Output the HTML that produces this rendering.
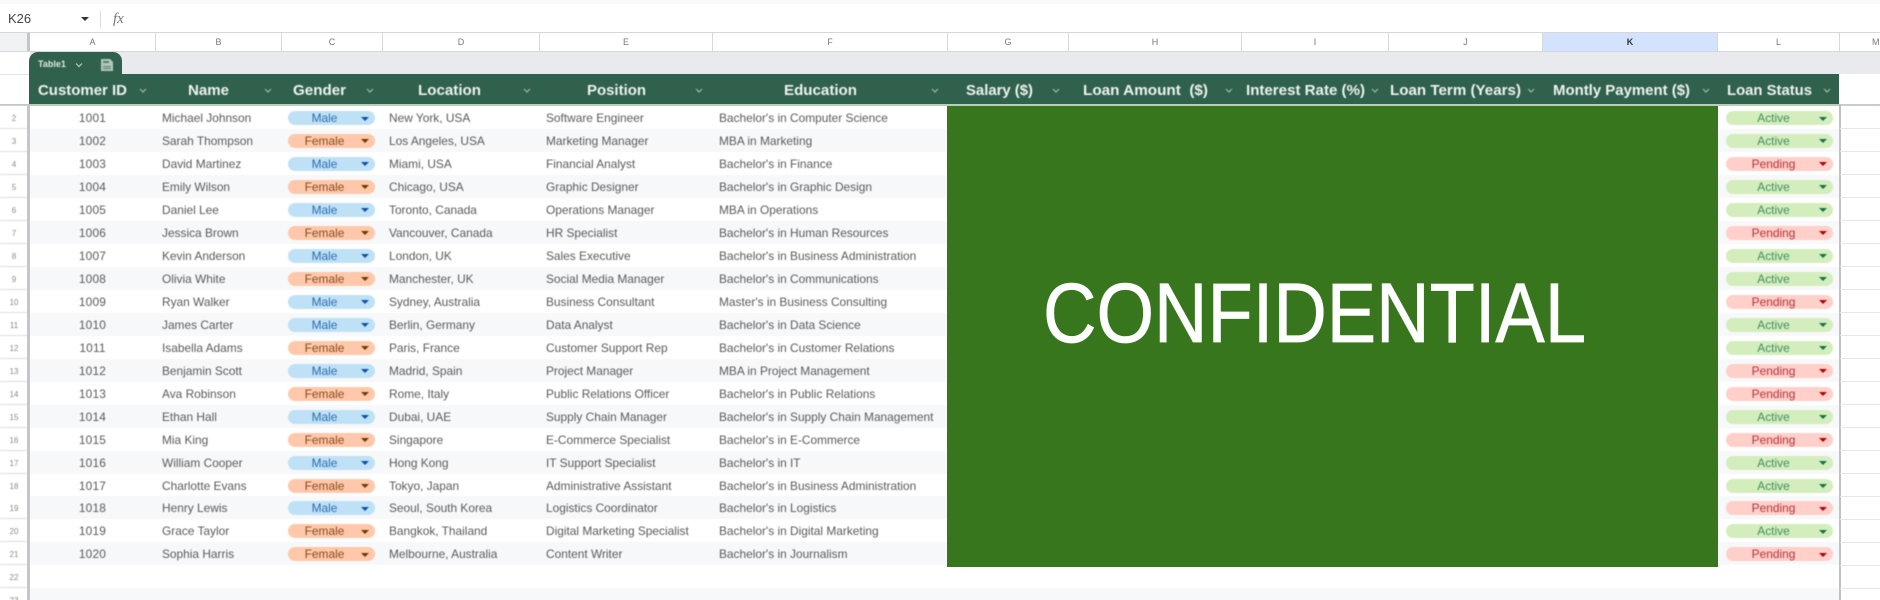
<!DOCTYPE html>
<html><head><meta charset="utf-8"><title>Sheet</title>
<style>
html,body{margin:0;padding:0;background:#fff}
#p{position:relative;width:1880px;height:600px;overflow:hidden;background:#fff;font-family:"Liberation Sans",sans-serif}
.a{position:absolute}
#rows{position:absolute;left:0;top:106px;width:1880px;filter:blur(.45px)}
.r{position:relative;height:22.97px;line-height:25px;font-size:11.9px;color:#5a5a5a;white-space:nowrap}
.r:nth-child(even){background:#f7f8f9}
.r>b{font-weight:400;position:absolute;top:0}
.n{left:0;width:28px;text-align:center;font-size:8px;color:#888;background:#fff;height:22px;border-bottom:1px solid #dadce0}
.i{left:30px;width:125px;text-align:center;letter-spacing:.2px}
.m{left:162px}.l{left:389px}.o{left:546px}.e{left:719px}
.c{top:5px!important;height:14px;line-height:14px;border-radius:7px;text-align:center}
.g{left:288px;width:87px;padding-right:14px;box-sizing:border-box}
.s{left:1726px;width:107px;padding-right:12px;box-sizing:border-box}
.M{background:#bfe1f6;color:#2b6cb0}.F{background:#ffc8aa;color:#8a4a1c}
.A{background:#d4edbc;color:#3f8f63}.P{background:#ffcfc9;color:#b5313a}
.c i{position:absolute;right:6px;top:5.5px;width:0;height:0;border-left:4px solid transparent;border-right:4px solid transparent;border-top:4px solid currentColor}
.M i{color:#0a53a8}.F i{color:#753800}.A i{color:#11734b}.P i{color:#b10202}
.h{position:absolute;top:33px;height:18px;line-height:19px;font-size:9px;color:#777;text-align:center;border-right:1px solid #d5d7da;box-sizing:border-box;filter:blur(.3px)}
.gl{position:absolute;left:1840px;width:40px;height:1px;background:#e6e7e9}
</style></head><body><div id="p">

<div class="a" style="left:0;top:0;width:1880px;height:4px;background:#f8f9fa"></div>
<div class="a" style="left:8px;top:11px;font-size:13px;line-height:15px;color:#444;filter:blur(.35px)">K26</div>
<div class="a" style="left:81px;top:17px;border-left:4px solid transparent;border-right:4px solid transparent;border-top:4px solid #333"></div>
<div class="a" style="left:100px;top:11px;width:1px;height:17px;background:#dadce0"></div>
<div class="a" style="left:113px;top:10px;font:italic 15px/18px 'Liberation Serif',serif;color:#777;filter:blur(.3px)">fx</div>

<div class="a" style="left:0;top:32px;width:1880px;height:1px;background:#d5d7da"></div>
<div class="a" style="left:0;top:33px;width:27px;height:18px;background:#f1f2f3"></div>
<div class="a" style="left:27px;top:33px;width:3px;height:19px;background:#c4c6c9"></div>
<div class="h" style="left:30px;width:126px">A</div>
<div class="h" style="left:156px;width:126px">B</div>
<div class="h" style="left:282px;width:101px">C</div>
<div class="h" style="left:383px;width:157px">D</div>
<div class="h" style="left:540px;width:173px">E</div>
<div class="h" style="left:713px;width:235px">F</div>
<div class="h" style="left:948px;width:121px">G</div>
<div class="h" style="left:1069px;width:173px">H</div>
<div class="h" style="left:1242px;width:147px">I</div>
<div class="h" style="left:1389px;width:154px">J</div>
<div class="h" style="left:1543px;width:175px;background:#d3e3fd;color:#333;font-weight:700">K</div>
<div class="h" style="left:1718px;width:122px">L</div>
<div class="h" style="left:1840px;width:40px;border-right:0;padding-right:0;text-align:left;text-indent:32px">M</div>
<div class="a" style="left:0;top:51px;width:1880px;height:1px;background:#d5d7da"></div>

<div class="a" style="left:30px;top:52px;width:1850px;height:22px;background:#e8eaed"></div>
<div class="a" style="left:0;top:74px;width:29px;height:1px;background:#e3e4e6"></div>
<div class="a" style="left:29px;top:52px;width:93px;height:23px;background:#30614d;border-radius:9px 9px 0 0"></div>
<div class="a" style="left:38px;top:58px;font-size:9px;font-weight:700;line-height:13px;color:#dfe9e3;filter:blur(.4px)">Table1</div>
<svg class="a" style="left:72px;top:60px" width="14" height="10"><path d="M4 3.5l3 3 3-3" fill="none" stroke="#b9cbc1" stroke-width="1.2"/></svg>
<svg class="a" style="left:99px;top:57px;filter:blur(.5px)" width="16" height="16"><path d="M2 2h9l3 3v9H2z" fill="#b5c8be"/><path d="M4 4h6v2H4zM4 9h8v1H4zM4 11h8v1H4z" fill="#56806d"/></svg>

<div class="a" style="left:29px;top:74px;width:1810px;height:30px;background:#30614d"></div>
<div class="a" style="left:29px;top:104px;width:1810px;height:2px;background:#b9cdb9"></div>
<div class="a" style="left:0;top:104px;width:29px;height:2px;background:#c4c6c9"></div>
<div class="a" style="left:1839px;top:104px;width:41px;height:2px;background:#c9cbce"></div>

<svg class="a" style="left:0;top:70px;filter:blur(.4px)" width="1880" height="36" font-family="'Liberation Sans',sans-serif" font-weight="700" font-size="15" fill="#eef3f0">
<text x="38" y="25" textLength="89" lengthAdjust="spacingAndGlyphs">Customer ID</text>
<text x="188" y="25" textLength="41" lengthAdjust="spacingAndGlyphs">Name</text>
<text x="293" y="25" textLength="53" lengthAdjust="spacingAndGlyphs">Gender</text>
<text x="418" y="25" textLength="63" lengthAdjust="spacingAndGlyphs">Location</text>
<text x="587" y="25" textLength="59" lengthAdjust="spacingAndGlyphs">Position</text>
<text x="784" y="25" textLength="73" lengthAdjust="spacingAndGlyphs">Education</text>
<text x="966" y="25" textLength="67" lengthAdjust="spacingAndGlyphs">Salary ($)</text>
<text x="1083" y="25" textLength="125" lengthAdjust="spacingAndGlyphs">Loan Amount&#160; ($)</text>
<text x="1246" y="25" textLength="119" lengthAdjust="spacingAndGlyphs">Interest Rate (%)</text>
<text x="1390" y="25" textLength="131" lengthAdjust="spacingAndGlyphs">Loan Term (Years)</text>
<text x="1553" y="25" textLength="137" lengthAdjust="spacingAndGlyphs">Montly Payment ($)</text>
<text x="1727" y="25" textLength="85" lengthAdjust="spacingAndGlyphs">Loan Status</text>
<path d="M140 19l3 3 3-3M265 19l3 3 3-3M367 19l3 3 3-3M524 19l3 3 3-3M696 19l3 3 3-3M932 19l3 3 3-3M1053 19l3 3 3-3M1226 19l3 3 3-3M1372 19l3 3 3-3M1528 19l3 3 3-3M1703 19l3 3 3-3M1824 19l3 3 3-3" fill="none" stroke="#a0b9ac" stroke-width="1.2"/>
</svg>

<div id="rows">
<div class="r"><b class="n">2</b><b class="i">1001</b><b class="m">Michael Johnson</b><b class="c g M">Male<i></i></b><b class="l">New York, USA</b><b class="o">Software Engineer</b><b class="e">Bachelor's in Computer Science</b><b class="c s A">Active<i></i></b></div>
<div class="r"><b class="n">3</b><b class="i">1002</b><b class="m">Sarah Thompson</b><b class="c g F">Female<i></i></b><b class="l">Los Angeles, USA</b><b class="o">Marketing Manager</b><b class="e">MBA in Marketing</b><b class="c s A">Active<i></i></b></div>
<div class="r"><b class="n">4</b><b class="i">1003</b><b class="m">David Martinez</b><b class="c g M">Male<i></i></b><b class="l">Miami, USA</b><b class="o">Financial Analyst</b><b class="e">Bachelor's in Finance</b><b class="c s P">Pending<i></i></b></div>
<div class="r"><b class="n">5</b><b class="i">1004</b><b class="m">Emily Wilson</b><b class="c g F">Female<i></i></b><b class="l">Chicago, USA</b><b class="o">Graphic Designer</b><b class="e">Bachelor's in Graphic Design</b><b class="c s A">Active<i></i></b></div>
<div class="r"><b class="n">6</b><b class="i">1005</b><b class="m">Daniel Lee</b><b class="c g M">Male<i></i></b><b class="l">Toronto, Canada</b><b class="o">Operations Manager</b><b class="e">MBA in Operations</b><b class="c s A">Active<i></i></b></div>
<div class="r"><b class="n">7</b><b class="i">1006</b><b class="m">Jessica Brown</b><b class="c g F">Female<i></i></b><b class="l">Vancouver, Canada</b><b class="o">HR Specialist</b><b class="e">Bachelor's in Human Resources</b><b class="c s P">Pending<i></i></b></div>
<div class="r"><b class="n">8</b><b class="i">1007</b><b class="m">Kevin Anderson</b><b class="c g M">Male<i></i></b><b class="l">London, UK</b><b class="o">Sales Executive</b><b class="e">Bachelor's in Business Administration</b><b class="c s A">Active<i></i></b></div>
<div class="r"><b class="n">9</b><b class="i">1008</b><b class="m">Olivia White</b><b class="c g F">Female<i></i></b><b class="l">Manchester, UK</b><b class="o">Social Media Manager</b><b class="e">Bachelor's in Communications</b><b class="c s A">Active<i></i></b></div>
<div class="r"><b class="n">10</b><b class="i">1009</b><b class="m">Ryan Walker</b><b class="c g M">Male<i></i></b><b class="l">Sydney, Australia</b><b class="o">Business Consultant</b><b class="e">Master's in Business Consulting</b><b class="c s P">Pending<i></i></b></div>
<div class="r"><b class="n">11</b><b class="i">1010</b><b class="m">James Carter</b><b class="c g M">Male<i></i></b><b class="l">Berlin, Germany</b><b class="o">Data Analyst</b><b class="e">Bachelor's in Data Science</b><b class="c s A">Active<i></i></b></div>
<div class="r"><b class="n">12</b><b class="i">1011</b><b class="m">Isabella Adams</b><b class="c g F">Female<i></i></b><b class="l">Paris, France</b><b class="o">Customer Support Rep</b><b class="e">Bachelor's in Customer Relations</b><b class="c s A">Active<i></i></b></div>
<div class="r"><b class="n">13</b><b class="i">1012</b><b class="m">Benjamin Scott</b><b class="c g M">Male<i></i></b><b class="l">Madrid, Spain</b><b class="o">Project Manager</b><b class="e">MBA in Project Management</b><b class="c s P">Pending<i></i></b></div>
<div class="r"><b class="n">14</b><b class="i">1013</b><b class="m">Ava Robinson</b><b class="c g F">Female<i></i></b><b class="l">Rome, Italy</b><b class="o">Public Relations Officer</b><b class="e">Bachelor's in Public Relations</b><b class="c s P">Pending<i></i></b></div>
<div class="r"><b class="n">15</b><b class="i">1014</b><b class="m">Ethan Hall</b><b class="c g M">Male<i></i></b><b class="l">Dubai, UAE</b><b class="o">Supply Chain Manager</b><b class="e">Bachelor's in Supply Chain Management</b><b class="c s A">Active<i></i></b></div>
<div class="r"><b class="n">16</b><b class="i">1015</b><b class="m">Mia King</b><b class="c g F">Female<i></i></b><b class="l">Singapore</b><b class="o">E-Commerce Specialist</b><b class="e">Bachelor's in E-Commerce</b><b class="c s P">Pending<i></i></b></div>
<div class="r"><b class="n">17</b><b class="i">1016</b><b class="m">William Cooper</b><b class="c g M">Male<i></i></b><b class="l">Hong Kong</b><b class="o">IT Support Specialist</b><b class="e">Bachelor's in IT</b><b class="c s A">Active<i></i></b></div>
<div class="r"><b class="n">18</b><b class="i">1017</b><b class="m">Charlotte Evans</b><b class="c g F">Female<i></i></b><b class="l">Tokyo, Japan</b><b class="o">Administrative Assistant</b><b class="e">Bachelor's in Business Administration</b><b class="c s A">Active<i></i></b></div>
<div class="r"><b class="n">19</b><b class="i">1018</b><b class="m">Henry Lewis</b><b class="c g M">Male<i></i></b><b class="l">Seoul, South Korea</b><b class="o">Logistics Coordinator</b><b class="e">Bachelor's in Logistics</b><b class="c s P">Pending<i></i></b></div>
<div class="r"><b class="n">20</b><b class="i">1019</b><b class="m">Grace Taylor</b><b class="c g F">Female<i></i></b><b class="l">Bangkok, Thailand</b><b class="o">Digital Marketing Specialist</b><b class="e">Bachelor's in Digital Marketing</b><b class="c s A">Active<i></i></b></div>
<div class="r"><b class="n">21</b><b class="i">1020</b><b class="m">Sophia Harris</b><b class="c g F">Female<i></i></b><b class="l">Melbourne, Australia</b><b class="o">Content Writer</b><b class="e">Bachelor's in Journalism</b><b class="c s P">Pending<i></i></b></div>
<div class="r" style="background:#fff"><b class="n">22</b></div>
<div class="r" style="background:#f7f8f9"><b class="n">23</b></div>
</div>

<div class="a" style="left:27px;top:104px;width:3px;height:496px;background:#c4c6c9"></div>
<div class="a" style="left:1839px;top:104px;width:1.5px;height:496px;background:#bfc1c4"></div>
<div class="a" style="left:1840.5px;top:106px;width:40px;height:494px;background:#fff"></div>
<div class="gl" style="top:128px"></div><div class="gl" style="top:151px"></div><div class="gl" style="top:174px"></div><div class="gl" style="top:197px"></div><div class="gl" style="top:220px"></div><div class="gl" style="top:243px"></div><div class="gl" style="top:266px"></div><div class="gl" style="top:289px"></div><div class="gl" style="top:312px"></div><div class="gl" style="top:335px"></div><div class="gl" style="top:358px"></div><div class="gl" style="top:381px"></div><div class="gl" style="top:404px"></div><div class="gl" style="top:427px"></div><div class="gl" style="top:450px"></div><div class="gl" style="top:473px"></div><div class="gl" style="top:496px"></div><div class="gl" style="top:519px"></div><div class="gl" style="top:542px"></div><div class="gl" style="top:565px"></div><div class="gl" style="top:588px"></div>

<div class="a" style="left:947px;top:106px;width:771px;height:461px;background:#38761d"></div>
<svg class="a" style="left:947px;top:106px;filter:blur(.35px)" width="771" height="461"><text x="96" y="236" font-family="'Liberation Sans',sans-serif" font-size="84" fill="#fff" stroke="#fff" stroke-width=".7" textLength="543" lengthAdjust="spacingAndGlyphs">CONFIDENTIAL</text></svg>

</div></body></html>
